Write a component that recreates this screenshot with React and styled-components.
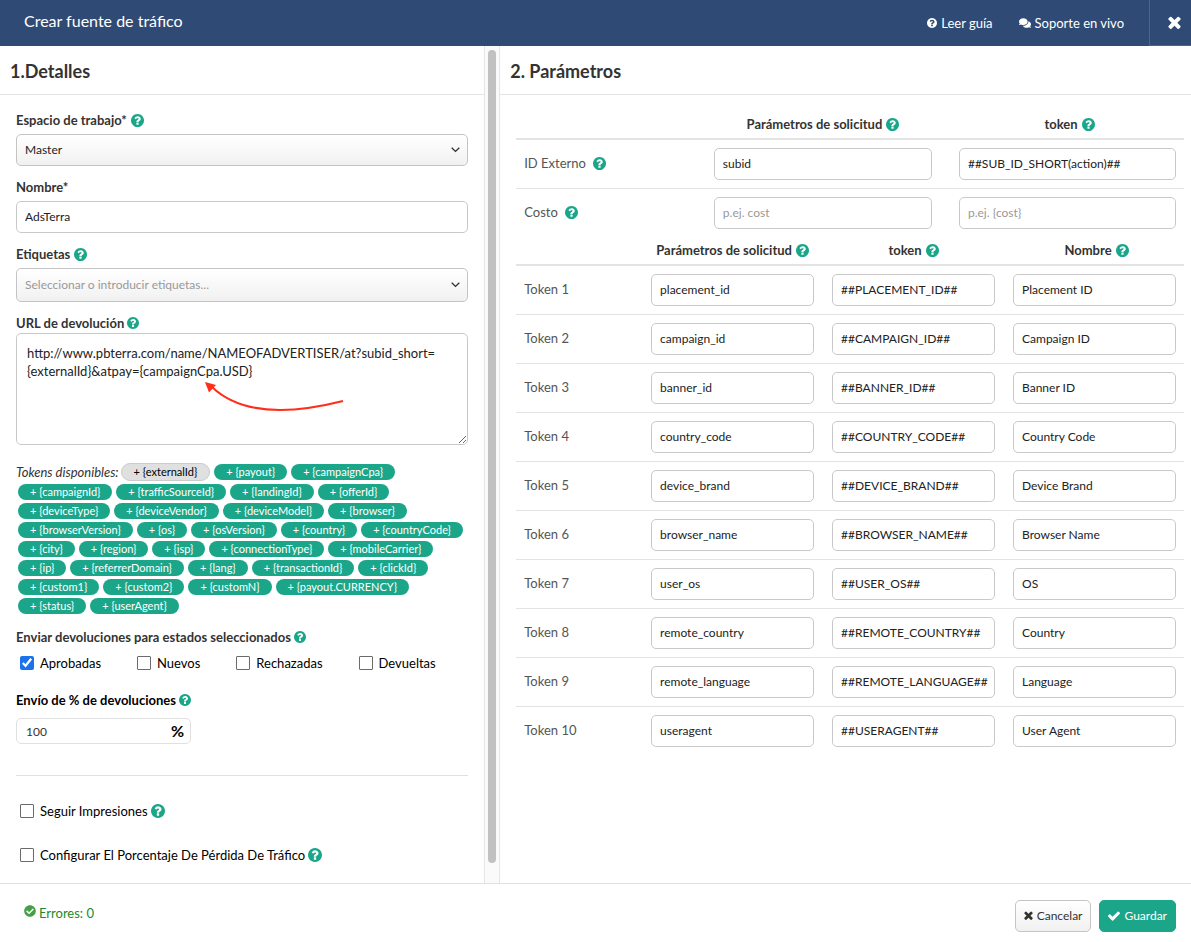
import React, { useState } from "react";
import styled, { createGlobalStyle } from "styled-components";
import { FaComments, FaCheckCircle } from "react-icons/fa";

const GREEN = "#1ba68a";

const GlobalStyle = createGlobalStyle`
  *, *::before, *::after { box-sizing: border-box; }
  body {
    margin: 0;
    background: #fff;
    color: #333;
    font: 13px/20px Lato, "Liberation Sans", sans-serif;
  }
  button, input, select, textarea { font-family: inherit; }
`;

const Page = styled.div`
  display: flex;
  flex-direction: column;
  min-height: 100vh;
`;

const TopBar = styled.header`
  display: flex;
  align-items: stretch;
  height: 46px;
  padding-left: 24px;
  background: #2f4a75;
  color: #fff;
`;

const PageTitle = styled.h1`
  flex: 1;
  margin: 0;
  font-size: 16px;
  font-weight: 400;
  line-height: 42px;
`;

const TopLinks = styled.nav`
  display: flex;
  gap: 26px;
  padding-right: 25px;
`;

const TopLink = styled.a`
  display: flex;
  align-items: center;
  gap: 4px;
  color: #fff;
  text-decoration: none;
`;

const CloseButton = styled.button`
  display: flex;
  align-items: center;
  justify-content: center;
  width: 42px;
  padding: 0 0 0 8px;
  border: 0;
  border-left: 1px solid #4a6594;
  border-bottom: 1px solid #4a6594;
  background: none;
  color: #fff;
`;

const Main = styled.main`
  display: flex;
  flex: 1;
`;

const LeftPane = styled.section`
  display: flex;
  flex: 0 0 42%;
`;

const PaneContent = styled.div`
  flex: 1;
  min-width: 0;
`;

const RightPane = styled.section`
  flex: 1;
  min-width: 0;
`;

const PaneTitle = styled.h2`
  margin: 0;
  padding: 0 10px;
  border-bottom: 1px solid #e3e3e3;
  font-size: 18px;
  font-weight: 700;
  line-height: 50px;
  height: 49px;
`;

const ScrollTrack = styled.div`
  width: 16px;
  padding: 4px 3px 20px;
  border: solid #e6e6e6;
  border-width: 0 1px;
  background: #fafafa;
  display: flex;
`;

const ScrollThumb = styled.div`
  width: 8px;
  border-radius: 4px;
  background: #c1c1c1;
`;

const Form = styled.form`
  padding: 15px 16px 17px;
`;

const Field = styled.div`
  margin-bottom: 11px;
`;

const LabelRow = styled.div`
  display: flex;
  align-items: center;
  gap: ${(p) => (p.$tight ? 3 : 4)}px;
  margin-bottom: ${(p) => p.$below ?? 4}px;
  color: ${(p) => (p.$dark ? "#000" : "inherit")};
  font-weight: 700;
`;

const HelpSvg = styled.svg`
  flex: none;
  color: ${(p) => (p.$plain ? "inherit" : GREEN)};
`;

const TextInput = styled.input`
  display: block;
  width: 100%;
  height: 32px;
  padding: 0 4px 2px 8px;
  border: 1px solid #c9c9c9;
  border-radius: 5px;
  background: #fff;
  color: #222;
  font-size: 12px;
  &::placeholder { color: #999; }
`;

const SelectBox = styled.div`
  position: relative;
  svg {
    position: absolute;
    top: 50%;
    right: 8px;
    margin-top: -4px;
    pointer-events: none;
  }
`;

const Select = styled.select`
  display: block;
  width: 100%;
  height: ${(p) => (p.$tall ? 34 : 32)}px;
  padding: 0 8px 2px;
  border: 1px solid #c4c4c4;
  border-radius: 5px;
  background: linear-gradient(#fff, #f1f1f1);
  color: ${(p) => (p.$muted ? "#999" : "#222")};
  font-size: 12px;
  appearance: none;
`;

const AreaBox = styled.div`
  position: relative;
  margin-bottom: 18px;
`;

const TextArea = styled.textarea`
  display: block;
  width: 100%;
  height: 112px;
  padding: 10px;
  border: 1px solid #c9c9c9;
  border-radius: 5px;
  color: #222;
  font-size: 13px;
  line-height: 18px;
`;

const Arrow = styled.svg`
  position: absolute;
  top: 0;
  left: 0;
  pointer-events: none;
`;

const TokenList = styled.div`
  display: flex;
  flex-wrap: wrap;
  align-items: center;
  gap: 3px 4px;
  margin-bottom: 13px;
  padding-left: 2px;
`;

const TokenCaption = styled.em`
  margin: 0 -2px;
  line-height: 18px;
`;

const TokenChip = styled.button`
  height: ${(p) => (p.$active ? 18 : 16)}px;
  padding: 0 12px;
  border: ${(p) => (p.$active ? "1px solid #ccc" : "0")};
  border-radius: 9px;
  background: ${(p) => (p.$active ? "#e0e0e0" : GREEN)};
  color: ${(p) => (p.$active ? "#000" : "#fff")};
  font-size: 11px;
  line-height: 16px;
  white-space: nowrap;
`;

const CheckRow = styled.div`
  display: flex;
  gap: 36px;
  margin-bottom: ${(p) => p.$below}px;
  padding-left: 4px;
`;

const CheckLabel = styled.label`
  display: flex;
  align-items: center;
  gap: 6px;
  color: #000;
  input {
    width: 14px;
    height: 14px;
    margin: 0;
    accent-color: #1a73e8;
  }
  input:not(:checked) {
    appearance: none;
    border: 1px solid #6b6b6b;
    border-radius: 1px;
    background: #fff;
  }
`;

const CheckText = styled.span`
  display: flex;
  align-items: center;
  gap: 3px;
`;

const PercentBox = styled.div`
  display: flex;
  align-items: center;
  width: 175px;
  height: 26px;
  padding: 0 6px 0 9px;
  border: 1px solid #e0e0e0;
  border-radius: 5px;
  color: #000;
  font-size: 16px;
  font-weight: 700;
  input {
    flex: 1;
    min-width: 0;
    padding: 0;
    border: 0;
    color: #333;
    font-size: 12px;
  }
`;

const Divider = styled.hr`
  margin: 31px 0 25px;
  border: 0;
  border-top: 1px solid #e0e0e0;
`;

const Tables = styled.div`
  padding: 16px 7px 16px 16px;
`;

const Table = styled.table`
  width: 100%;
  table-layout: fixed;
  border-collapse: separate;
  border-spacing: 0;
  th, td {
    padding: 8px ${(p) => p.$gutter}px 8px 8px;
    border-bottom: 1px solid #e3e3e3;
  }
  th:last-child, td:last-child { padding-right: 8px; }
  thead th, thead td {
    padding-top: 3px;
    padding-bottom: 4px;
    border-bottom: 2px solid #e3e3e3;
  }
  thead th:last-child { padding-right: 4px; }
  tbody th { padding-bottom: 10px; }
  tbody tr:last-child > * { border-bottom: 0; }
`;

const ColumnHead = styled.span`
  display: flex;
  align-items: center;
  justify-content: center;
  gap: 4px;
  font-weight: 700;
`;

const RowHead = styled.th`
  color: #555;
  font-weight: 400;
  text-align: left;
`;

const RowLabel = styled.span`
  display: flex;
  align-items: center;
  gap: 7px;
`;

const Footer = styled.footer`
  display: flex;
  justify-content: space-between;
  padding: 16px 15px 10px 24px;
  border-top: 1px solid #e0e0e0;
`;

const Status = styled.p`
  display: flex;
  gap: 3px;
  margin: 3px 0 0;
  color: #1a8a2c;
  svg {
    margin-top: 2px;
    color: #43a047;
    font-size: 12px;
  }
`;

const Actions = styled.div`
  display: flex;
  gap: 8px;
`;

const ActionButton = styled.button`
  display: flex;
  align-items: center;
  gap: 4px;
  height: 32px;
  padding: 0 8px 1px;
  border: 1px solid ${(p) => (p.$primary ? GREEN : "#c4c4c4")};
  border-radius: 5px;
  background: ${(p) => (p.$primary ? GREEN : "linear-gradient(#fff, #f1f1f1)")};
  color: ${(p) => (p.$primary ? "#fff" : "#333")};
  font-size: 12px;
`;

const TOKENS = [
  "externalId", "payout", "campaignCpa", "campaignId", "trafficSourceId", "landingId", "offerId",
  "deviceType", "deviceVendor", "deviceModel", "browser", "browserVersion", "os", "osVersion",
  "country", "countryCode", "city", "region", "isp", "connectionType", "mobileCarrier", "ip",
  "referrerDomain", "lang", "transactionId", "clickId", "custom1", "custom2", "customN",
  "payout.CURRENCY", "status", "userAgent",
];

const STATES = ["Aprobadas", "Nuevos", "Rechazadas", "Devueltas"];

const PARAMS = [
  ["placement_id", "##PLACEMENT_ID##", "Placement ID"],
  ["campaign_id", "##CAMPAIGN_ID##", "Campaign ID"],
  ["banner_id", "##BANNER_ID##", "Banner ID"],
  ["country_code", "##COUNTRY_CODE##", "Country Code"],
  ["device_brand", "##DEVICE_BRAND##", "Device Brand"],
  ["browser_name", "##BROWSER_NAME##", "Browser Name"],
  ["user_os", "##USER_OS##", "OS"],
  ["remote_country", "##REMOTE_COUNTRY##", "Country"],
  ["remote_language", "##REMOTE_LANGUAGE##", "Language"],
  ["useragent", "##USERAGENT##", "User Agent"],
];

function HelpIcon({ size = 13, plain }) {
  return (
    <HelpSvg $plain={plain} width={size} height={size} viewBox="128 128 1536 1536" fill="currentColor" aria-hidden="true">
      <path d="M1024 1376v-192q0-14-9-23t-23-9h-192q-14 0-23 9t-9 23v192q0 14 9 23t23 9h192q14 0 23-9t9-23zm256-672q0-88-55.5-163t-138.5-116-170-41q-243 0-371 213-15 24 8 42l132 100q7 6 19 6 16 0 25-12 53-68 86-92 34-24 86-24 48 0 85.5 26t37.5 59q0 38-20 61t-68 45q-63 28-115.5 86.5t-52.5 125.5v36q0 14 9 23t23 9h192q14 0 23-9t9-23q0-19 21.5-49.5t54.5-49.5q32-18 49-28.5t46-35 44.5-48 28-60.5 12.5-81zm384 192q0 209-103 385.5t-279.5 279.5-385.5 103-385.5-103-279.5-279.5-103-385.5 103-385.5 279.5-279.5 385.5-103 385.5 103 279.5 279.5 103 385.5z" />
    </HelpSvg>
  );
}

function CrossIcon({ size }) {
  return (
    <svg width={size} height={size} viewBox="302 302 1188 1252" fill="currentColor" aria-hidden="true">
      <path d="M1490 1322q0 40-28 68l-136 136q-28 28-68 28t-68-28l-294-294-294 294q-28 28-68 28t-68-28l-136-136q-28-28-28-68t28-68l294-294-294-294q-28-28-28-68t28-68l136-136q28-28 68-28t68 28l294 294 294-294q28-28 68-28t68 28l136 136q28 28 28 68t-28 68l-294 294 294 294q28 28 28 68z" />
    </svg>
  );
}

function TickIcon() {
  return (
    <svg width="12" height="10" viewBox="121 322 1550 1200" fill="currentColor" aria-hidden="true">
      <path d="M1671 566q0 40-28 68l-724 724-136 136q-28 28-68 28t-68-28l-136-136-362-362q-28-28-28-68t28-68l136-136q28-28 68-28t68 28l294 295 656-657q28-28 68-28t68 28l136 136q28 28 28 68z" />
    </svg>
  );
}

function Chevron() {
  return (
    <svg width="9" height="8" viewBox="0 0 9 8" fill="none" stroke="#333" strokeWidth="1.4">
      <path d="M0.7 1.8 L4.5 5.4 L8.3 1.8" />
    </svg>
  );
}

function Check({ text, checked, help }) {
  const [on, setOn] = useState(!!checked);
  return (
    <CheckLabel>
      <input type="checkbox" checked={on} onChange={() => setOn(!on)} />
      <CheckText>
        {text}
        {help && <HelpIcon size={14} />}
      </CheckText>
    </CheckLabel>
  );
}

function HeadCell({ children }) {
  return (
    <th scope="col">
      <ColumnHead>{children}<HelpIcon /></ColumnHead>
    </th>
  );
}

export default function App() {
  return (
    <>
      <GlobalStyle />
      <Page>
        <TopBar>
          <PageTitle>Crear fuente de tráfico</PageTitle>
          <TopLinks>
            <TopLink href="#guia"><HelpIcon size={10} plain />Leer guía</TopLink>
            <TopLink href="#soporte"><FaComments size={12} />Soporte en vivo</TopLink>
          </TopLinks>
          <CloseButton type="button" aria-label="Cerrar"><CrossIcon size={13} /></CloseButton>
        </TopBar>

        <Main>
          <LeftPane>
            <PaneContent>
              <PaneTitle>1.Detalles</PaneTitle>
              <Form>
                <Field>
                  <LabelRow><label htmlFor="workspace">Espacio de trabajo*</label><HelpIcon /></LabelRow>
                  <SelectBox>
                    <Select id="workspace"><option>Master</option></Select>
                    <Chevron />
                  </SelectBox>
                </Field>
                <Field>
                  <LabelRow><label htmlFor="name">Nombre*</label></LabelRow>
                  <TextInput id="name" defaultValue="AdsTerra" />
                </Field>
                <Field>
                  <LabelRow><label htmlFor="tags">Etiquetas</label><HelpIcon /></LabelRow>
                  <SelectBox>
                    <Select id="tags" $tall $muted><option>Seleccionar o introducir etiquetas...</option></Select>
                    <Chevron />
                  </SelectBox>
                </Field>
                <LabelRow $tight $below={0}><label htmlFor="postback">URL de devolución</label><HelpIcon size={12} /></LabelRow>
                <AreaBox>
                  <TextArea
                    id="postback"
                    spellCheck={false}
                    defaultValue={"http://www.pbterra.com/name/NAMEOFADVERTISER/at?subid_short=\n{externalId}&atpay={campaignCpa.USD}"}
                  />
                  <Arrow width="340" height="90" viewBox="0 0 340 90" aria-hidden="true">
                    <path d="M196 54 C219 76 260 85 327 68" fill="none" stroke="#ff2d1a" strokeWidth="2" />
                    <path d="M189 49 L200 52 L193 59.5 Z" fill="#ff2d1a" />
                  </Arrow>
                </AreaBox>

                <TokenList>
                  <TokenCaption>Tokens disponibles:</TokenCaption>
                  {TOKENS.map((t, i) => (
                    <TokenChip type="button" key={t} $active={i === 0}>{`+ {${t}}`}</TokenChip>
                  ))}
                </TokenList>

                <LabelRow $tight $below={6}>Enviar devoluciones para estados seleccionados<HelpIcon size={12} /></LabelRow>
                <CheckRow $below={17}>
                  {STATES.map((s, i) => <Check key={s} text={s} checked={i === 0} />)}
                </CheckRow>

                <LabelRow $tight $dark $below={8}><label htmlFor="percent">Envío de % de devoluciones</label><HelpIcon size={12} /></LabelRow>
                <PercentBox><input id="percent" defaultValue="100" />%</PercentBox>

                <Divider />
                <CheckRow $below={24}><Check text="Seguir Impresiones" help /></CheckRow>
                <CheckRow $below={0}><Check text="Configurar El Porcentaje De Pérdida De Tráfico" help /></CheckRow>
              </Form>
            </PaneContent>
            <ScrollTrack><ScrollThumb /></ScrollTrack>
          </LeftPane>

          <RightPane>
            <PaneTitle>2. Parámetros</PaneTitle>
            <Tables>
              <Table $gutter={19}>
                <colgroup><col style={{ width: "28.4%" }} /><col /><col style={{ width: "34.9%" }} /></colgroup>
                <thead>
                  <tr><td /><HeadCell>Parámetros de solicitud</HeadCell><HeadCell>token</HeadCell></tr>
                </thead>
                <tbody>
                  <tr>
                    <RowHead scope="row"><RowLabel>ID Externo<HelpIcon /></RowLabel></RowHead>
                    <td><TextInput aria-label="ID Externo, parámetro" defaultValue="subid" /></td>
                    <td><TextInput aria-label="ID Externo, token" defaultValue="##SUB_ID_SHORT(action)##" /></td>
                  </tr>
                  <tr>
                    <RowHead scope="row"><RowLabel>Costo<HelpIcon /></RowLabel></RowHead>
                    <td><TextInput aria-label="Costo, parámetro" placeholder="p.ej. cost" /></td>
                    <td><TextInput aria-label="Costo, token" placeholder="p.ej. {cost}" /></td>
                  </tr>
                </tbody>
              </Table>
              <Table $gutter={10}>
                <colgroup><col style={{ width: "19%" }} /><col /><col /><col style={{ width: "26.8%" }} /></colgroup>
                <thead>
                  <tr><td /><HeadCell>Parámetros de solicitud</HeadCell><HeadCell>token</HeadCell><HeadCell>Nombre</HeadCell></tr>
                </thead>
                <tbody>
                  {PARAMS.map((row, i) => (
                    <tr key={row[0]}>
                      <RowHead scope="row">Token {i + 1}</RowHead>
                      {row.map((value, j) => (
                        <td key={j}>
                          <TextInput aria-label={`Token ${i + 1}, ${["parámetro", "token", "nombre"][j]}`} defaultValue={value} />
                        </td>
                      ))}
                    </tr>
                  ))}
                </tbody>
              </Table>
            </Tables>
          </RightPane>
        </Main>

        <Footer>
          <Status><FaCheckCircle />Errores: 0</Status>
          <Actions>
            <ActionButton type="button"><CrossIcon size={9} />Cancelar</ActionButton>
            <ActionButton type="button" $primary><TickIcon />Guardar</ActionButton>
          </Actions>
        </Footer>
      </Page>
    </>
  );
}
